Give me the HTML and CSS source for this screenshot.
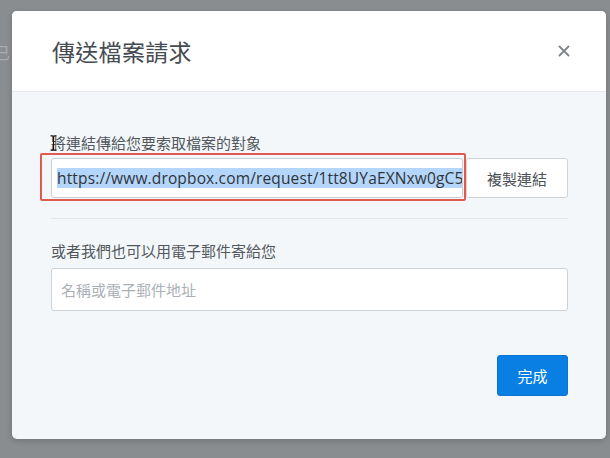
FILE: index.html
```html
<!DOCTYPE html>
<html lang="zh-Hant">
<head>
<meta charset="utf-8">
<title>傳送檔案請求</title>
<link rel="stylesheet" href="styles.css">
</head>
<body>
<div class="backdrop-text" aria-hidden="true">已</div>
<div class="modal">
  <div class="modal-header">
    <h1 class="modal-title">傳送檔案請求</h1>
    <button class="close" aria-label="關閉">
      <svg width="12" height="12" viewBox="0 0 12 12"><path d="M1.5 1.5 L10.5 10.5 M10.5 1.5 L1.5 10.5" stroke="#7f8489" stroke-width="1.8" stroke-linecap="round"/></svg>
    </button>
  </div>
  <div class="modal-body">
    <div class="field-label first">將連結傳給您要索取檔案的對象
      <svg class="ibeam" width="7" height="16" viewBox="0 0 7 16"><path d="M0.5 0.8 H2.5 Q3.5 0.8 3.5 2 V14 Q3.5 15.2 2.5 15.2 H0.5 M6.5 0.8 H4.5 Q3.5 0.8 3.5 2 M3.5 14 Q3.5 15.2 4.5 15.2 H6.5" fill="none" stroke="#111" stroke-width="1.2"/></svg>
    </div>
    <div class="link-row">
      <div class="link-input"><span class="selected">https://www.dropbox.com/request/1tt8UYaEXNxw0gC5</span></div>
      <button class="btn-copy">複製連結</button>
      <div class="highlight-box"></div>
    </div>
    <div class="divider"></div>
    <div class="field-label second">或者我們也可以用電子郵件寄給您</div>
    <div class="email-input">名稱或電子郵件地址</div>
    <div class="footer">
      <button class="btn-primary">完成</button>
    </div>
  </div>
</div>
</body>
</html>
```
FILE: styles.css
```css
* { box-sizing: border-box; }
html, body {
  margin: 0;
  padding: 0;
}
body {
  width: 610px;
  height: 458px;
  overflow: hidden;
  background: #8a8d90;
  font-family: "Open Sans", "Noto Sans CJK TC", sans-serif;
  position: relative;
  padding-top: 11px;
}
.backdrop-text {
  position: absolute;
  left: -6px;
  top: 40px;
  font-size: 16px;
  color: #a9acaf;
  font-family: "Noto Sans CJK TC", sans-serif;
}
.modal {
  position: relative;
  margin-left: 12px;
  width: 594px;
  height: 428px;
  border-radius: 5px;
  background: #f4f7fa;
  box-shadow: 0 2px 6px rgba(0,0,0,0.18);
  overflow: hidden;
}
.modal-header {
  height: 81px;
  background: #fff;
  border-bottom: 1px solid #e4e8ec;
  display: flex;
  align-items: center;
  justify-content: space-between;
  padding: 0 36px 0 40px;
}
.modal-title {
  margin: 0;
  font-family: "Noto Sans CJK TC", sans-serif;
  font-weight: 400;
  font-size: 23px;
  color: #454b51;
  letter-spacing: 0.3px;
}
.close {
  border: 0;
  background: none;
  padding: 0;
  width: 12px;
  height: 12px;
  display: flex;
}
.modal-body {
  padding: 41px 38px 0 39px;
}
.field-label {
  font-family: "Noto Sans CJK TC", sans-serif;
  font-size: 15px;
  line-height: 20px;
  color: #51575d;
  position: relative;
}
.field-label.first { margin-bottom: 5px; }
.field-label.second { margin-top: 22px; margin-bottom: 7px; }
.ibeam {
  position: absolute;
  left: -1px;
  top: 2px;
}
.link-row {
  display: flex;
  align-items: center;
  height: 40px;
  position: relative;
}
.link-input {
  width: 412px;
  height: 40px;
  background: #fff;
  border: 1px solid #c9ced3;
  border-radius: 3px;
  padding: 0 0 0 5px;
  display: flex;
  align-items: center;
  font-size: 15.5px;
  color: #2f3439;
  white-space: nowrap;
  overflow: hidden;
}
.selected {
  background: #b4d6fb;
  line-height: 20px;
  letter-spacing: 0.15px;
}
.btn-copy {
  margin-left: 3px;
  width: 102px;
  height: 40px;
  background: #fff;
  border: 1px solid #cfd4d9;
  border-radius: 3px;
  font-family: "Noto Sans CJK TC", sans-serif;
  font-size: 15px;
  color: #4a5056;
  padding: 0;
}
.highlight-box {
  position: absolute;
  left: -11px;
  top: -5px;
  width: 426px;
  height: 48px;
  border: 2px solid #e05a50;
  border-radius: 2px;
  pointer-events: none;
}
.divider {
  margin-top: 20px;
  height: 1px;
  background: #e2e6ea;
}
.email-input {
  height: 43px;
  background: #fff;
  border: 1px solid #cdd2d7;
  border-radius: 3px;
  padding-left: 9px;
  display: flex;
  align-items: center;
  font-family: "Noto Sans CJK TC", sans-serif;
  font-size: 15px;
  color: #aab0b5;
}
.footer {
  display: flex;
  justify-content: flex-end;
  margin-top: 44px;
}
.btn-primary {
  width: 71px;
  height: 41px;
  background: #0a7fe3;
  border: 1px solid #0a74d2;
  border-radius: 3px;
  color: #fff;
  font-family: "Noto Sans CJK TC", sans-serif;
  font-size: 15px;
  padding: 0;
}
```
